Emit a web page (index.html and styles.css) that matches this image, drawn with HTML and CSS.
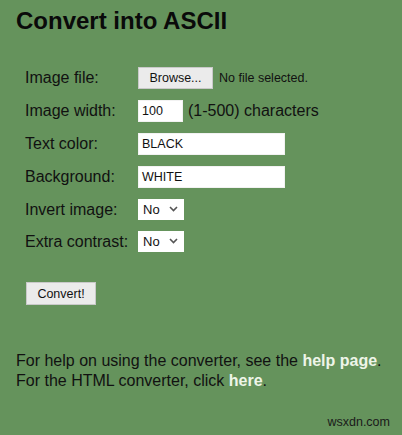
FILE: index.html
```html
<!DOCTYPE html>
<html lang="en">
<head>
<meta charset="utf-8">
<title>Convert into ASCII</title>
<link rel="stylesheet" href="styles.css">
</head>
<body>
<div class="page">
  <h1 class="title">Convert into ASCII</h1>
  <form class="form">
    <div class="grid">
      <span class="label">Image file:</span>
      <div class="field">
        <span class="btn btn-browse">Browse...</span>
        <span class="nofile">No file selected.</span>
      </div>

      <span class="label">Image width:</span>
      <div class="field">
        <span class="input input-small">100</span>
        <span class="hint">(1-500) characters</span>
      </div>

      <span class="label">Text color:</span>
      <div class="field"><span class="input input-wide">BLACK</span></div>

      <span class="label">Background:</span>
      <div class="field"><span class="input input-wide">WHITE</span></div>

      <span class="label">Invert image:</span>
      <div class="field">
        <span class="select">No
          <svg class="chev" width="9" height="6" viewBox="0 0 9 6"><path d="M1 1 L4.5 4.5 L8 1" fill="none" stroke="#555" stroke-width="1.6"/></svg>
        </span>
      </div>

      <span class="label">Extra contrast:</span>
      <div class="field">
        <span class="select">No
          <svg class="chev" width="9" height="6" viewBox="0 0 9 6"><path d="M1 1 L4.5 4.5 L8 1" fill="none" stroke="#555" stroke-width="1.6"/></svg>
        </span>
      </div>
    </div>
    <div class="submit-row">
      <span class="btn btn-convert">Convert!</span>
    </div>
  </form>
  <p class="help">For help on using the converter, see the <a href="#" class="link">help page</a>.<br>For the HTML converter, click <a href="#" class="link">here</a>.</p>
</div>
<div class="watermark">wsxdn.com</div>
</body>
</html>
```

FILE: styles.css
```css
html, body {
  margin: 0;
  padding: 0;
}
body {
  background: #65935c;
  font-family: "Liberation Sans", Arial, sans-serif;
  color: #111;
  width: 402px;
  height: 435px;
  overflow: hidden;
  position: relative;
}
.page {
  padding: 0 16px;
}
.title {
  margin: 7px 0 0 0;
  font-size: 24px;
  line-height: 28px;
  font-weight: bold;
  color: #0a0a0a;
}
.form {
  margin: 32px 0 0 0;
}
.grid {
  display: grid;
  grid-template-columns: 113px auto;
  row-gap: 11px;
  padding-left: 9px;
  align-items: center;
}
.label {
  font-size: 16px;
  line-height: 18px;
  color: #111;
}
.field {
  display: flex;
  align-items: center;
}
.field-first {
  margin-bottom: 1px;
}
.btn {
  display: inline-flex;
  align-items: center;
  justify-content: center;
  box-sizing: border-box;
  background: #ebebeb;
  border: 1px solid #c9c9c9;
  font-family: "Liberation Sans", Arial, sans-serif;
  font-size: 12.5px;
  color: #111;
}
.btn-browse {
  width: 75px;
  height: 22px;
}
.nofile {
  margin-left: 6px;
  font-size: 12.5px;
  color: #111;
}
.input {
  display: inline-flex;
  align-items: center;
  box-sizing: border-box;
  height: 22px;
  background: #fff;
  border: 1px solid #f2f2f2;
  padding-left: 3px;
  font-size: 12.5px;
  color: #111;
}
.input-small {
  width: 45px;
}
.input-wide {
  width: 147px;
}
.hint {
  margin-left: 5px;
  font-size: 16px;
}
.select {
  position: relative;
  display: inline-flex;
  align-items: center;
  box-sizing: border-box;
  width: 46px;
  height: 21px;
  background: #fff;
  padding-left: 5px;
  font-size: 13px;
  color: #111;
}
.chev {
  position: absolute;
  right: 6px;
  top: 7px;
}
.submit-row {
  margin-top: 30px;
  padding-left: 10px;
}
.btn-convert {
  width: 70px;
  height: 23px;
}
.help {
  margin: 46px 0 0 0;
  font-size: 16px;
  line-height: 20px;
  color: #111;
}
.link {
  color: #eef5e8;
  font-weight: bold;
  text-decoration: none;
}
.watermark {
  position: absolute;
  right: 12px;
  bottom: 6px;
  font-size: 12.5px;
  color: #1a1a1a;
}
```
